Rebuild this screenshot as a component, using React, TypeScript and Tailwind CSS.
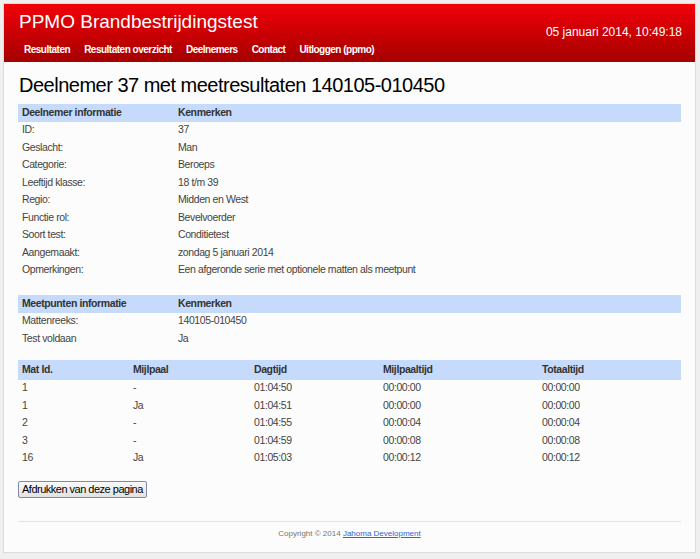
import React from 'react';

const nav = ['Resultaten', 'Resultaten overzicht', 'Deelnemers', 'Contact', 'Uitloggen (ppmo)'];

const deelnemer = [
  ['ID:', '37'],
  ['Geslacht:', 'Man'],
  ['Categorie:', 'Beroeps'],
  ['Leeftijd klasse:', '18 t/m 39'],
  ['Regio:', 'Midden en West'],
  ['Functie rol:', 'Bevelvoerder'],
  ['Soort test:', 'Conditietest'],
  ['Aangemaakt:', 'zondag 5 januari 2014'],
  ['Opmerkingen:', 'Een afgeronde serie met optionele matten als meetpunt'],
];

const meetpunten = [
  ['Mattenreeks:', '140105-010450'],
  ['Test voldaan', 'Ja'],
];

const matten = [
  ['1', '-', '01:04:50', '00:00:00', '00:00:00'],
  ['1', 'Ja', '01:04:51', '00:00:00', '00:00:00'],
  ['2', '-', '01:04:55', '00:00:04', '00:00:04'],
  ['3', '-', '01:04:59', '00:00:08', '00:00:08'],
  ['16', 'Ja', '01:05:03', '00:00:12', '00:00:12'],
];

const KeyValueTable: React.FC<{ head: string; rows: string[][] }> = ({ head, rows }) => (
  <table className="w-full border-collapse text-[10.5px] tracking-[-0.4px]">
    <thead>
      <tr className="h-[17.5px] bg-[#c6dbfb]">
        <th className="w-[156px] px-1 text-left font-bold text-[#333]">{head}</th>
        <th className="px-1 text-left font-bold text-[#333]">Kenmerken</th>
      </tr>
    </thead>
    <tbody>
      {rows.map(([k, v]) => (
        <tr key={k} className="h-[17.5px] text-[#444]">
          <td className="px-1">{k}</td>
          <td className="px-1">{v}</td>
        </tr>
      ))}
    </tbody>
  </table>
);

export default function App() {
  return (
    <div className="min-h-[559px] bg-[#efefef] pt-[3px] pl-[3px] font-['Liberation_Sans',Arial,sans-serif]">
      <div className="flex h-[550px] w-[693px] flex-col border border-[#dcdcdc] bg-[#fbfcfb]">
        <header className="h-[58px] bg-gradient-to-b from-[#f2000a] to-[#a50000] pl-[15px] pr-[13px] text-white">
          <div className="flex h-[30px] items-start justify-between">
            <h1 className="mt-[6px] text-[19px] leading-[24px]">PPMO Brandbestrijdingstest</h1>
            <div className="mt-[21px] text-[12px] leading-[14px]">05 januari 2014, 10:49:18</div>
          </div>
          <nav className="mt-[9px] flex gap-[14px] pl-[5px] text-[10px] font-bold leading-[14px] tracking-[-0.5px]">
            {nav.map((n) => (
              <span key={n}>{n}</span>
            ))}
          </nav>
        </header>

        <main className="flex-1 px-[14px]">
          <h2 className="mt-[11px] pl-[1px] text-[20px] leading-[24px] tracking-[-0.5px] text-black">
            Deelnemer 37 met meetresultaten 140105-010450
          </h2>
          <div className="mt-[7px]">
            <KeyValueTable head="Deelnemer informatie" rows={deelnemer} />
          </div>
          <div className="mt-[16px]">
            <KeyValueTable head="Meetpunten informatie" rows={meetpunten} />
          </div>
          <table className="mt-[12.5px] w-full border-collapse text-[10.5px] tracking-[-0.4px]">
            <thead>
              <tr className="h-[19.5px] bg-[#c6dbfb] text-left font-bold text-[#333]">
                <th className="w-[111px] px-1">Mat Id.</th>
                <th className="w-[121px] px-1">Mijlpaal</th>
                <th className="w-[129px] px-1">Dagtijd</th>
                <th className="w-[159px] px-1">Mijlpaaltijd</th>
                <th className="px-1">Totaaltijd</th>
              </tr>
            </thead>
            <tbody>
              {matten.map((r, i) => (
                <tr key={i} className="h-[17.5px] text-[#444]">
                  {r.map((c, j) => (
                    <td key={j} className="px-1">{c}</td>
                  ))}
                </tr>
              ))}
            </tbody>
          </table>
          <button className="mt-[14px] h-[17px] rounded-[2px] border border-[#7a8ca8] bg-gradient-to-b from-[#fafafa] to-[#e2e2e2] px-[3px] text-[11px] leading-[13px] tracking-[-0.5px] text-black">
            Afdrukken van deze pagina
          </button>
        </main>

        <footer className="mx-[14px] mb-[12px] border-t border-[#dde6f0] pt-[6px] text-center text-[8px] leading-[12px] text-[#777]">
          Copyright © 2014 <a className="text-[#3366cc] underline">Jahoma Development</a>
        </footer>
      </div>
    </div>
  );
}
